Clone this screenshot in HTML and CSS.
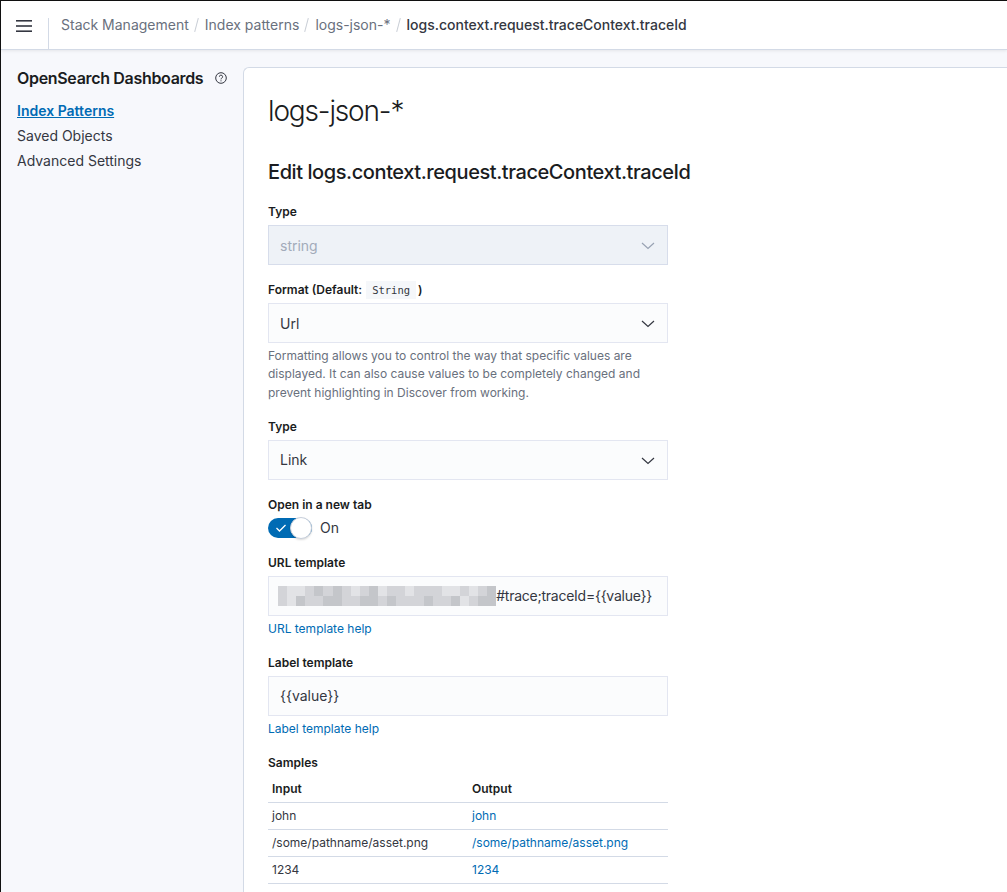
FILE: index.html
```html
<!DOCTYPE html>
<html lang="en">
<head>
<meta charset="utf-8">
<title>Stack Management - Index patterns</title>
<link rel="stylesheet" href="styles.css">
</head>
<body>
<div class="page">
  <header class="topbar">
    <button class="menu-btn" aria-label="Menu">
      <svg width="18" height="14" viewBox="0 0 18 14"><rect x="1" y="1" width="16" height="1.6" fill="#343741"/><rect x="1" y="6.2" width="16" height="1.6" fill="#343741"/><rect x="1" y="11.4" width="16" height="1.6" fill="#343741"/></svg>
    </button>
    <nav class="crumbs">
      <span class="crumb">Stack Management</span><span class="sep"></span>
      <span class="crumb">Index patterns</span><span class="sep"></span>
      <span class="crumb">logs-json-*</span><span class="sep"></span>
      <span class="crumb current">logs.context.request.traceContext.traceId</span>
    </nav>
  </header>
  <div class="body">
    <aside class="sidebar">
      <div class="side-title"><span>OpenSearch Dashboards</span>
        <svg class="help" width="12" height="12" viewBox="0 0 12 12"><circle cx="6" cy="6" r="5.3" fill="none" stroke="#343741" stroke-width="1"/><path d="M4.4 4.7a1.6 1.6 0 1 1 2.2 1.5c-.4.2-.6.5-.6.9v.3" fill="none" stroke="#343741" stroke-width="1"/><circle cx="6" cy="8.8" r=".6" fill="#343741"/></svg>
      </div>
      <a class="side-link active" href="#">Index Patterns</a>
      <a class="side-link" href="#">Saved Objects</a>
      <a class="side-link" href="#">Advanced Settings</a>
    </aside>
    <main class="panel">
      <h1 class="title">logs-json-*</h1>
      <h2 class="subtitle">Edit logs.context.request.traceContext.traceId</h2>
      <form class="form">
        <div class="row">
          <label class="label">Type</label>
          <div class="select disabled"><span>string</span>
            <svg width="16" height="16" viewBox="0 0 16 16"><polyline points="2,6 8,11.5 14,6" fill="none" stroke="#98A2B3" stroke-width="1.2"/></svg>
          </div>
        </div>
        <div class="row">
          <label class="label">Format (Default: <code class="code">String</code>)</label>
          <div class="select"><span>Url</span>
            <svg width="16" height="16" viewBox="0 0 16 16"><polyline points="2,6 8,11.5 14,6" fill="none" stroke="#343741" stroke-width="1.2"/></svg>
          </div>
          <p class="help-text">Formatting allows you to control the way that specific values are displayed. It can also cause values to be completely changed and prevent highlighting in Discover from working.</p>
        </div>
        <div class="row">
          <label class="label">Type</label>
          <div class="select"><span>Link</span>
            <svg width="16" height="16" viewBox="0 0 16 16"><polyline points="2,6 8,11.5 14,6" fill="none" stroke="#343741" stroke-width="1.2"/></svg>
          </div>
        </div>
        <div class="row">
          <label class="label">Open in a new tab</label>
          <div class="switch-row">
            <span class="switch">
              <svg class="check" width="12" height="10" viewBox="0 0 12 10"><polyline points="1.5,5 4.5,8 10.5,2" fill="none" stroke="#fff" stroke-width="1.3"/></svg>
              <span class="knob"></span>
            </span>
            <span class="switch-label">On</span>
          </div>
        </div>
        <div class="row">
          <label class="label">URL template</label>
          <div class="input">
            <span class="blur">
              <i class="p2"></i><i class="p1"></i><i class="p1"></i><i class="p2"></i><i class="p3"></i><i class="p2"></i><i class="p3"></i><i class="p2"></i><i class="p1"></i><i class="p2"></i><i class="p3"></i><i class="p1"></i><i class="p2"></i><i class="p2"></i><i class="p1"></i><i class="p2"></i><i class="p2"></i><i class="p2"></i><i class="p1"></i><i class="p1"></i><i class="p2"></i><i class="p1"></i><i class="p2"></i><i class="p3"></i>
              <i class="p2"></i><i class="p1"></i><i class="p3"></i><i class="p2"></i><i class="p2"></i><i class="p3"></i><i class="p3"></i><i class="p2"></i><i class="p2"></i><i class="p3"></i><i class="p3"></i><i class="p2"></i><i class="p3"></i><i class="p2"></i><i class="p2"></i><i class="p2"></i><i class="p3"></i><i class="p2"></i><i class="p2"></i><i class="p3"></i><i class="p1"></i><i class="p2"></i><i class="p3"></i><i class="p3"></i>
            </span><span class="nowrap tight">#trace;traceId={{value}}</span>
          </div>
          <a class="help-link" href="#">URL template help</a>
        </div>
        <div class="row">
          <label class="label">Label template</label>
          <div class="input"><span>{{value}}</span></div>
          <a class="help-link" href="#">Label template help</a>
        </div>
        <div class="row">
          <label class="label">Samples</label>
          <table class="samples">
            <thead><tr><th>Input</th><th>Output</th></tr></thead>
            <tbody>
              <tr><td>john</td><td><a href="#">john</a></td></tr>
              <tr><td>/some/pathname/asset.png</td><td><a href="#">/some/pathname/asset.png</a></td></tr>
              <tr><td>1234</td><td><a href="#">1234</a></td></tr>
            </tbody>
          </table>
        </div>
      </form>
    </main>
  </div>
</div>
</body>
</html>
```
FILE: styles.css
```css
* { box-sizing: border-box; }
html, body { margin: 0; padding: 0; height: 100%; }
body {
  font-family: Inter, "Noto Sans", "Liberation Sans", sans-serif;
  color: #343741;
  background: #F7F8FC;
  overflow: hidden;
}
.page {
  height: 892px;
  border-top: 1px solid #111;
  border-left: 1px solid #111;
  display: flex;
  flex-direction: column;
}
.topbar {
  height: 49px;
  flex: none;
  background: #fff;
  border-bottom: 1px solid #D3DAE6;
  box-shadow: 0 1px 3px rgba(0,0,0,0.08);
  display: flex;
  align-items: center;
  position: relative;
  z-index: 1;
}
.menu-btn {
  width: 48px;
  height: 31px;
  margin-top: 17px;
  align-self: flex-start;
  border: 0;
  background: none;
  border-right: 1px solid #D3DAE6;
  padding: 0 0 10px 0;
  display: flex;
  align-items: flex-start;
  justify-content: center;
}
.menu-btn svg { margin-top: 1px; margin-left: -2px; }
.crumbs {
  display: flex;
  align-items: center;
  margin-left: 12px;
  font-size: 14px;
  padding-bottom: 1px;
}
.crumb { color: #69707D; }
.crumb.current { color: #343741; font-weight: 500; }
.sep {
  display: inline-block;
  width: 1px;
  height: 14px;
  background: #C9CED6;
  transform: rotate(15deg);
  margin: 0 8px 0 7px;
}
.body {
  flex: 1;
  display: flex;
  min-height: 0;
}
.sidebar {
  width: 242px;
  flex: none;
  padding: 16px 0 16px 16px;
  display: flex;
  flex-direction: column;
}
.side-title {
  font-size: 16px;
  font-weight: 600;
  line-height: 24px;
  color: #1a1c21;
  display: flex;
  align-items: center;
  white-space: nowrap;
  letter-spacing: -0.32px;
  margin-bottom: 8px;
}
.help { margin-left: 12px; flex: none; }
.side-link {
  font-size: 14px;
  line-height: 25px;
  color: #343741;
  text-decoration: none;
}
.side-link.active {
  color: #006BB4;
  font-weight: 600;
  text-decoration: underline;
  align-self: flex-start;
}
.panel {
  flex: 1;
  margin-top: 17px;
  background: #fff;
  border-left: 1px solid #D3DAE6;
  border-top: 1px solid #D3DAE6;
  border-top-left-radius: 6px;
  padding: 24px 24px;
}
.title {
  margin: 0;
  font-size: 28px;
  font-weight: 300;
  line-height: 38px;
  color: #1a1c21;
  letter-spacing: -1.15px;
}
.subtitle {
  margin: 28px 0 0;
  font-size: 20px;
  font-weight: 500;
  line-height: 28px;
  color: #1a1c21;
  letter-spacing: -0.42px;
}
.form {
  width: 400px;
  margin-top: 17px;
  display: flex;
  flex-direction: column;
  gap: 16px;
}
.row { display: flex; flex-direction: column; }
.label {
  font-size: 12px;
  font-weight: 600;
  line-height: 18px;
  color: #1a1c21;
  margin-bottom: 4px;
  display: flex;
  align-items: center;
}
.code {
  font-family: "DejaVu Sans Mono", "Liberation Mono", monospace;
  font-size: 10.5px;
  font-weight: 400;
  background: #F5F7FA;
  color: #343741;
  padding: 0 6px;
  margin: 0 2px 0 4px;
  line-height: 18px;
}
.select, .input {
  height: 40px;
  background: #FBFCFD;
  box-shadow: inset 0 0 0 1px rgba(17,43,134,0.1);
  display: flex;
  align-items: center;
  justify-content: space-between;
  padding: 0 12px;
  font-size: 14px;
  color: #343741;
}
.select.disabled {
  background: #EEF2F7;
  color: #A2ABBA;
}
.input { justify-content: flex-start; }
.nowrap { white-space: nowrap; }
.tight { letter-spacing: -0.25px; }
.help-text {
  margin: 4px 0 0;
  font-size: 12px;
  line-height: 18.3px;
  color: #69707D;
}
.switch-row {
  display: flex;
  align-items: center;
  height: 20px;
}
.switch {
  width: 44px;
  height: 20px;
  border-radius: 10px;
  background: #006BB4;
  display: flex;
  align-items: center;
  justify-content: space-between;
  padding-left: 7px;
}
.knob {
  width: 22px;
  height: 22px;
  border-radius: 50%;
  background: #fff;
  border: 1px solid #C9D0DC;
  box-shadow: 0 1px 2px rgba(0,0,0,0.15);
}
.switch-label {
  margin-left: 8px;
  font-size: 14px;
  color: #343741;
}
.blur {
  flex: none;
  display: grid;
  grid-template-columns: repeat(24, 9.1px);
  grid-auto-rows: 10px;
  margin-left: -2px;
  filter: blur(0.4px);
}
.blur i { display: block; }
.p1 { background: #E2E3E6; }
.p2 { background: #D3D4D8; }
.p3 { background: #C4C6CA; }
.help-link {
  margin-top: 4px;
  font-size: 12px;
  line-height: 18px;
  color: #006BB4;
  text-decoration: none;
  align-self: flex-start;
}
.samples {
  width: 400px;
  border-collapse: collapse;
  table-layout: fixed;
  font-size: 12px;
}
.samples th, .samples td {
  text-align: left;
  height: 27px;
  padding: 0 4px;
  border-bottom: 1px solid #D3DAE6;
  line-height: 18px;
}
.samples th {
  font-weight: 600;
  color: #1a1c21;
}
.samples td { color: #343741; }
.samples td a { color: #006BB4; text-decoration: none; }
```
